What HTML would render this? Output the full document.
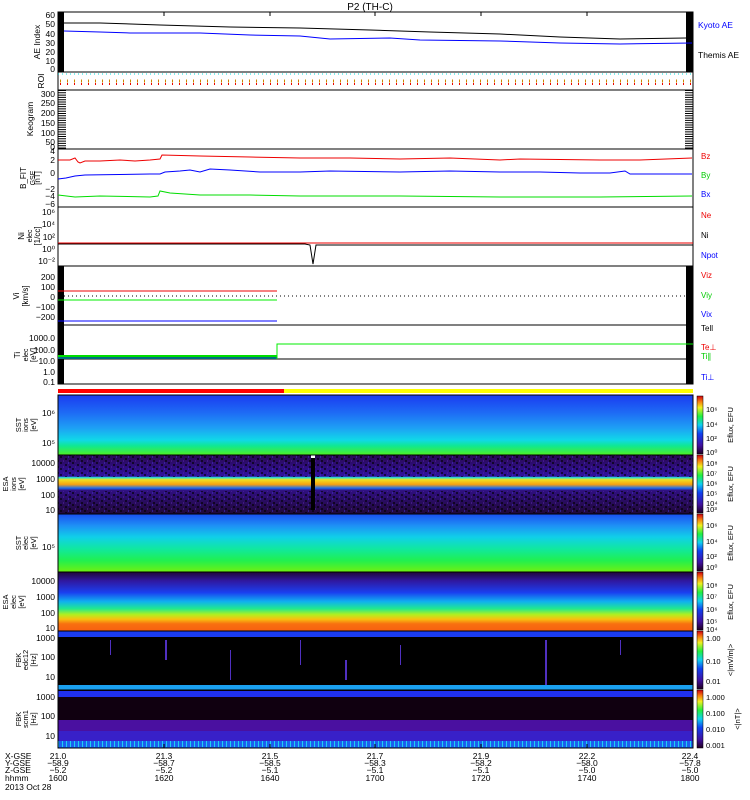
<!DOCTYPE html>
<html><head><meta charset="utf-8"><style>
html,body{margin:0;padding:0;background:#fff;}
svg{display:block;font-family:"Liberation Sans",sans-serif;}
</style></head><body>
<svg width="750" height="800" viewBox="0 0 750 800" xmlns="http://www.w3.org/2000/svg">
<defs>
<linearGradient id="sst_i" x1="0" y1="0" x2="0" y2="1">
<stop offset="0" stop-color="#1a3cf0"/><stop offset="0.3" stop-color="#1e6cf5"/><stop offset="0.55" stop-color="#1ea0f5"/><stop offset="0.75" stop-color="#10d8e8"/><stop offset="0.85" stop-color="#10e890"/><stop offset="1" stop-color="#50f020"/></linearGradient>
<linearGradient id="esa_i" x1="0" y1="0" x2="0" y2="1">
<stop offset="0" stop-color="#2a0a50"/><stop offset="0.36" stop-color="#3010a0"/><stop offset="0.38" stop-color="#20e0e0"/><stop offset="0.42" stop-color="#f0e020"/><stop offset="0.5" stop-color="#f8a010"/><stop offset="0.56" stop-color="#2070f0"/><stop offset="0.6" stop-color="#301080"/><stop offset="1" stop-color="#200838"/></linearGradient>
<linearGradient id="sst_e" x1="0" y1="0" x2="0" y2="1">
<stop offset="0" stop-color="#1a50f0"/><stop offset="0.2" stop-color="#1e90f5"/><stop offset="0.4" stop-color="#10d0e8"/><stop offset="0.6" stop-color="#10e8a0"/><stop offset="0.8" stop-color="#20f050"/><stop offset="1" stop-color="#70f010"/></linearGradient>
<linearGradient id="esa_e" x1="0" y1="0" x2="0" y2="1">
<stop offset="0" stop-color="#200838"/><stop offset="0.15" stop-color="#3018a0"/><stop offset="0.35" stop-color="#1a40f0"/><stop offset="0.5" stop-color="#10b0f0"/><stop offset="0.62" stop-color="#20e890"/><stop offset="0.72" stop-color="#b0f020"/><stop offset="0.8" stop-color="#f8c010"/><stop offset="0.88" stop-color="#f87010"/><stop offset="1" stop-color="#f86010"/></linearGradient>
<linearGradient id="cbar" x1="0" y1="1" x2="0" y2="0">
<stop offset="0" stop-color="#200020"/><stop offset="0.15" stop-color="#4010a0"/><stop offset="0.35" stop-color="#1040f0"/><stop offset="0.5" stop-color="#10d0f0"/><stop offset="0.65" stop-color="#20f040"/><stop offset="0.8" stop-color="#f0f020"/><stop offset="0.9" stop-color="#f88010"/><stop offset="1" stop-color="#d00010"/></linearGradient>
<pattern id="noise" width="12" height="6" patternUnits="userSpaceOnUse">
<rect x="0" y="0" width="2" height="2" fill="#000"/><rect x="5" y="2" width="2" height="2" fill="#000"/><rect x="9" y="4" width="2" height="2" fill="#000"/><rect x="3" y="4" width="1" height="2" fill="#5020a0"/><rect x="8" y="0" width="1" height="2" fill="#4030c0"/></pattern>
</defs>
<text x="370" y="10" font-size="10" text-anchor="middle">P2 (TH-C)</text>

<!-- AE panel -->
<rect x="58" y="12" width="635" height="60" fill="#fff" stroke="#000"/>
<rect x="58" y="12" width="6" height="60" fill="#000"/><rect x="686" y="12" width="7" height="60" fill="#000"/>
<polyline fill="none" stroke="#000" points="64,23 100,23 160,25 230,27 300,28 370,30 430,32 500,34 560,37 620,39 686,38"/>
<polyline fill="none" stroke="#00f" points="64,31 100,32 130,33 200,33 250,35 300,36 330,39 390,38 420,40 500,41 560,43 620,44 692,43"/>
<g font-size="8.5" text-anchor="end"><text x="55" y="18">60</text><text x="55" y="27">50</text><text x="55" y="37">40</text><text x="55" y="46">30</text><text x="55" y="55">20</text><text x="55" y="64">10</text><text x="55" y="72">0</text></g>
<text transform="translate(40,42) rotate(-90)" font-size="8.5" text-anchor="middle">AE Index</text>
<text x="698" y="28" font-size="8.5" fill="#00f">Kyoto AE</text><text x="698" y="58" font-size="8.5">Themis AE</text>

<!-- ROI -->
<rect x="58" y="72" width="635" height="18" fill="#fff" stroke="#000"/>
<line x1="58" y1="74" x2="693" y2="74" stroke="#0dd" stroke-dasharray="1,3"/>
<line x1="60" y1="81" x2="693" y2="81" stroke="#c80" stroke-width="3" stroke-dasharray="1,6"/>
<line x1="60" y1="84" x2="693" y2="84" stroke="#e00" stroke-width="2" stroke-dasharray="1,6"/>
<text transform="translate(44,81) rotate(-90)" font-size="8.5" text-anchor="middle">ROI</text>

<!-- Keogram -->
<rect x="58" y="90" width="635" height="59" fill="#fff" stroke="#000"/>
<g font-size="8.5" text-anchor="end"><text x="55" y="97">300</text><text x="55" y="106">250</text><text x="55" y="116">200</text><text x="55" y="126">150</text><text x="55" y="136">100</text><text x="55" y="145">50</text><text x="55" y="150">0</text></g>
<line x1="62" y1="90" x2="62" y2="149" stroke="#000" stroke-width="8" stroke-dasharray="1,1.3"/>
<line x1="689" y1="90" x2="689" y2="149" stroke="#000" stroke-width="8" stroke-dasharray="1,1.3"/>
<text transform="translate(33,119) rotate(-90)" font-size="8.5" text-anchor="middle">Keogram</text>

<!-- B FIT -->
<rect x="58" y="149" width="635" height="58" fill="#fff" stroke="#000"/>
<polyline fill="none" stroke="#e00" points="58,160 70,160 75,158 78,162 80,163 85,161 100,161 120,160 135,161 150,160 160,159 162,155 200,156 250,157 300,158 350,158 400,159 450,158 500,160 520,159 600,160 640,160 692,158"/>
<polyline fill="none" stroke="#00f" points="58,179 66,178 75,176 85,175 150,174 160,174 165,172 180,171 190,170 200,172 210,169 230,170 260,172 300,172 330,171 400,172 450,171 500,172 540,172 580,173 610,173 625,171 630,174 692,174"/>
<polyline fill="none" stroke="#0d0" points="58,195 75,197 100,196 150,197 158,196 160,191 170,193 200,195 250,195 300,196 400,196 500,197 600,197 692,196"/>
<g font-size="8.5" text-anchor="end"><text x="55" y="154">4</text><text x="55" y="163">2</text><text x="55" y="176">0</text><text x="55" y="192">−2</text><text x="55" y="199">−4</text><text x="55" y="207">−6</text></g>
<text transform="translate(26,178) rotate(-90)" font-size="8" text-anchor="middle">B_FIT</text>
<text transform="translate(35,178) rotate(-90)" font-size="7" text-anchor="middle">GSE</text>
<text transform="translate(40,178) rotate(-90)" font-size="8" text-anchor="middle">[nT]</text>
<text x="701" y="159" font-size="8" fill="#e00">Bz</text><text x="701" y="178" font-size="8" fill="#0c0">By</text><text x="701" y="197" font-size="8" fill="#00f">Bx</text>

<!-- Ni -->
<rect x="58" y="207" width="635" height="59" fill="#fff" stroke="#000"/>
<line x1="58" y1="243" x2="693" y2="243" stroke="#e00"/>
<polyline fill="none" stroke="#000" points="58,244 275,244 305,244 310,245 313,264 316,245 320,245 693,245"/>
<g font-size="8.5" text-anchor="end"><text x="55" y="215">10⁶</text><text x="55" y="227">10⁴</text><text x="55" y="240">10²</text><text x="55" y="252">10⁰</text><text x="55" y="264">10⁻²</text></g>
<text transform="translate(24,236) rotate(-90)" font-size="8" text-anchor="middle">Ni</text>
<text transform="translate(32,236) rotate(-90)" font-size="7" text-anchor="middle">elec</text>
<text transform="translate(40,236) rotate(-90)" font-size="8" text-anchor="middle">[1/cc]</text>
<text x="701" y="218" font-size="8" fill="#e00">Ne</text><text x="701" y="238" font-size="8">Ni</text><text x="701" y="258" font-size="8" fill="#00f">Npot</text>

<!-- Vi -->
<rect x="58" y="266" width="635" height="59" fill="#fff" stroke="#000"/>
<rect x="58" y="266" width="6" height="59" fill="#000"/><rect x="686" y="266" width="7" height="59" fill="#000"/>
<line x1="58" y1="291" x2="277" y2="291" stroke="#e00"/>
<line x1="58" y1="300" x2="277" y2="300" stroke="#0e0"/>
<line x1="58" y1="321" x2="277" y2="321" stroke="#00f"/>
<line x1="64" y1="296" x2="686" y2="296" stroke="#000" stroke-dasharray="1,3"/>
<g font-size="8.5" text-anchor="end"><text x="55" y="280">200</text><text x="55" y="290">100</text><text x="55" y="300">0</text><text x="55" y="310">−100</text><text x="55" y="320">−200</text></g>
<text transform="translate(19,296) rotate(-90)" font-size="8" text-anchor="middle">Vi</text>
<text transform="translate(28,296) rotate(-90)" font-size="8" text-anchor="middle">[km/s]</text>
<text x="701" y="278" font-size="8" fill="#e00">Viz</text><text x="701" y="298" font-size="8" fill="#0c0">Viy</text><text x="701" y="317" font-size="8" fill="#00f">Vix</text><text x="701" y="331" font-size="8">Tell</text>

<!-- Ti -->
<rect x="58" y="325" width="635" height="59" fill="#fff" stroke="#000"/>
<rect x="58" y="325" width="6" height="59" fill="#000"/><rect x="686" y="325" width="7" height="59" fill="#000"/>
<line x1="58" y1="359" x2="693" y2="359" stroke="#000"/>
<rect x="58" y="355" width="219" height="4" fill="#0d0"/>
<line x1="58" y1="358" x2="277" y2="358" stroke="#00f"/>
<polyline fill="none" stroke="#0e0" points="277,359 277,344 693,344"/>
<g font-size="8.5" text-anchor="end"><text x="55" y="341">1000.0</text><text x="55" y="353">100.0</text><text x="55" y="364">10.0</text><text x="55" y="375">1.0</text><text x="55" y="385">0.1</text></g>
<text transform="translate(20,355) rotate(-90)" font-size="8" text-anchor="middle">Ti</text>
<text transform="translate(28,355) rotate(-90)" font-size="7" text-anchor="middle">elec</text>
<text transform="translate(36,355) rotate(-90)" font-size="8" text-anchor="middle">[eV]</text>
<text x="701" y="350" font-size="8" fill="#e00">Te⊥</text><text x="701" y="359" font-size="8" fill="#0c0">Ti∥</text><text x="701" y="380" font-size="8" fill="#00f">Ti⊥</text>

<!-- status bar -->
<rect x="58" y="389" width="226" height="4" fill="#f00"/><rect x="284" y="389" width="409" height="4" fill="#ff0"/>

<!-- spectrograms -->
<rect x="58" y="395" width="635" height="60" fill="url(#sst_i)"/>
<rect x="58" y="455" width="635" height="59" fill="url(#esa_i)"/>
<rect x="58" y="455" width="635" height="22" fill="url(#noise)" opacity="0.6"/>
<rect x="58" y="491" width="635" height="22" fill="url(#noise)" opacity="0.6"/>
<rect x="311" y="455" width="4" height="55" fill="#000"/><rect x="311" y="455" width="4" height="3" fill="#fff"/>
<rect x="58" y="514" width="635" height="58" fill="url(#sst_e)"/>
<rect x="58" y="572" width="635" height="59" fill="url(#esa_e)"/>
<rect x="58" y="631" width="635" height="59" fill="#000"/>
<rect x="58" y="631" width="635" height="6" fill="#1a3cf0"/>
<rect x="58" y="685" width="635" height="5" fill="#1aa0f0"/>
<rect x="58" y="690" width="635" height="58" fill="#100010"/>
<rect x="58" y="691" width="635" height="6" fill="#2030f0"/>
<rect x="58" y="720" width="635" height="11" fill="#4a10a0"/>
<rect x="58" y="731" width="635" height="10" fill="#3820c8"/>
<rect x="58" y="741" width="635" height="7" fill="#1a60f0"/>
<line x1="58" y1="744" x2="693" y2="744" stroke="#20d0f0" stroke-width="6" stroke-dasharray="1,3"/>
<g fill="#5030c0"><rect x="110" y="640" width="1" height="15"/><rect x="165" y="640" width="2" height="20"/><rect x="230" y="650" width="1" height="30"/><rect x="300" y="640" width="1" height="25"/><rect x="345" y="660" width="2" height="20"/><rect x="400" y="645" width="1" height="20"/><rect x="545" y="640" width="2" height="45"/><rect x="620" y="640" width="1" height="15"/></g>
<g fill="none" stroke="#000"><rect x="58" y="395" width="635" height="353"/>
<line x1="58" y1="455" x2="693" y2="455"/><line x1="58" y1="514" x2="693" y2="514"/><line x1="58" y1="572" x2="693" y2="572"/><line x1="58" y1="631" x2="693" y2="631"/><line x1="58" y1="690" x2="693" y2="690"/></g>

<!-- spectro labels -->
<g font-size="8.5" text-anchor="end"><text x="55" y="416">10⁶</text><text x="55" y="446">10⁵</text>
<text x="55" y="466">10000</text><text x="55" y="482">1000</text><text x="55" y="498">100</text><text x="55" y="513">10</text>
<text x="55" y="550">10⁵</text>
<text x="55" y="584">10000</text><text x="55" y="600">1000</text><text x="55" y="616">100</text><text x="55" y="631">10</text>
<text x="55" y="641">1000</text><text x="55" y="660">100</text><text x="55" y="680">10</text>
<text x="55" y="700">1000</text><text x="55" y="719">100</text><text x="55" y="739">10</text></g>
<g font-size="7.5" text-anchor="middle">
<text transform="translate(21,425) rotate(-90)">SST</text><text transform="translate(28,425) rotate(-90)">ions</text><text transform="translate(36,425) rotate(-90)">[eV]</text>
<text transform="translate(8,484) rotate(-90)">ESA</text><text transform="translate(16,484) rotate(-90)">ions</text><text transform="translate(24,484) rotate(-90)">[eV]</text>
<text transform="translate(21,543) rotate(-90)">SST</text><text transform="translate(28,543) rotate(-90)">elec</text><text transform="translate(36,543) rotate(-90)">[eV]</text>
<text transform="translate(8,602) rotate(-90)">ESA</text><text transform="translate(16,602) rotate(-90)">elec</text><text transform="translate(24,602) rotate(-90)">[eV]</text>
<text transform="translate(21,660) rotate(-90)">FBK</text><text transform="translate(28,660) rotate(-90)">edc12</text><text transform="translate(36,660) rotate(-90)">[Hz]</text>
<text transform="translate(21,719) rotate(-90)">FBK</text><text transform="translate(28,719) rotate(-90)">scm1</text><text transform="translate(36,719) rotate(-90)">[Hz]</text></g>

<!-- colorbars (one per panel) -->
<g stroke="#000" stroke-width="0.5">
<rect x="697" y="396" width="6" height="58" fill="url(#cbar)"/>
<rect x="697" y="455" width="6" height="58" fill="url(#cbar)"/>
<rect x="697" y="514" width="6" height="57" fill="url(#cbar)"/>
<rect x="697" y="572" width="6" height="58" fill="url(#cbar)"/>
<rect x="697" y="631" width="6" height="58" fill="url(#cbar)"/>
<rect x="697" y="690" width="6" height="58" fill="url(#cbar)"/>
</g>
<g font-size="7.5">
<text x="706" y="412">10⁶</text><text x="706" y="427">10⁴</text><text x="706" y="441">10²</text><text x="706" y="455">10⁰</text>
<text x="706" y="466">10⁸</text><text x="706" y="476">10⁷</text><text x="706" y="486">10⁶</text><text x="706" y="496">10⁵</text><text x="706" y="506">10⁴</text><text x="706" y="512">10³</text>
<text x="706" y="528">10⁶</text><text x="706" y="544">10⁴</text><text x="706" y="559">10²</text><text x="706" y="570">10⁰</text>
<text x="706" y="588">10⁸</text><text x="706" y="599">10⁷</text><text x="706" y="612">10⁶</text><text x="706" y="624">10⁵</text><text x="706" y="632">10⁴</text>
<text x="706" y="641">1.00</text><text x="706" y="664">0.10</text><text x="706" y="684">0.01</text>
<text x="706" y="700">1.000</text><text x="706" y="716">0.100</text><text x="706" y="732">0.010</text><text x="706" y="748">0.001</text></g>
<g font-size="7.5" text-anchor="middle">
<text transform="translate(733,425) rotate(-90)">Eflux, EFU</text><text transform="translate(733,484) rotate(-90)">Eflux, EFU</text>
<text transform="translate(733,543) rotate(-90)">Eflux, EFU</text><text transform="translate(733,602) rotate(-90)">Eflux, EFU</text>
<text transform="translate(733,660) rotate(-90)">&lt;|mV/m|&gt;</text><text transform="translate(740,719) rotate(-90)">&lt;|nT|&gt;</text></g>

<!-- x ticks -->
<g stroke="#000"><line x1="164" y1="12" x2="164" y2="16"/><line x1="270" y1="12" x2="270" y2="16"/><line x1="375" y1="12" x2="375" y2="16"/><line x1="481" y1="12" x2="481" y2="16"/><line x1="587" y1="12" x2="587" y2="16"/>
<line x1="164" y1="744" x2="164" y2="748"/><line x1="270" y1="744" x2="270" y2="748"/><line x1="375" y1="744" x2="375" y2="748"/><line x1="481" y1="744" x2="481" y2="748"/><line x1="587" y1="744" x2="587" y2="748"/></g>
<g font-size="8.5">
<text x="5" y="759">X-GSE</text><text x="5" y="766">Y-GSE</text><text x="5" y="773">Z-GSE</text><text x="5" y="781">hhmm</text><text x="5" y="790">2013 Oct 28</text></g>
<g font-size="8.5" text-anchor="middle">
<text x="58" y="759">21.0</text><text x="58" y="766">−58.9</text><text x="58" y="773">−5.2</text><text x="58" y="781">1600</text>
<text x="164" y="759">21.3</text><text x="164" y="766">−58.7</text><text x="164" y="773">−5.2</text><text x="164" y="781">1620</text>
<text x="270" y="759">21.5</text><text x="270" y="766">−58.5</text><text x="270" y="773">−5.1</text><text x="270" y="781">1640</text>
<text x="375" y="759">21.7</text><text x="375" y="766">−58.3</text><text x="375" y="773">−5.1</text><text x="375" y="781">1700</text>
<text x="481" y="759">21.9</text><text x="481" y="766">−58.2</text><text x="481" y="773">−5.1</text><text x="481" y="781">1720</text>
<text x="587" y="759">22.2</text><text x="587" y="766">−58.0</text><text x="587" y="773">−5.0</text><text x="587" y="781">1740</text>
<text x="690" y="759">22.4</text><text x="690" y="766">−57.8</text><text x="690" y="773">−5.0</text><text x="690" y="781">1800</text></g>
</svg>
</body></html>
